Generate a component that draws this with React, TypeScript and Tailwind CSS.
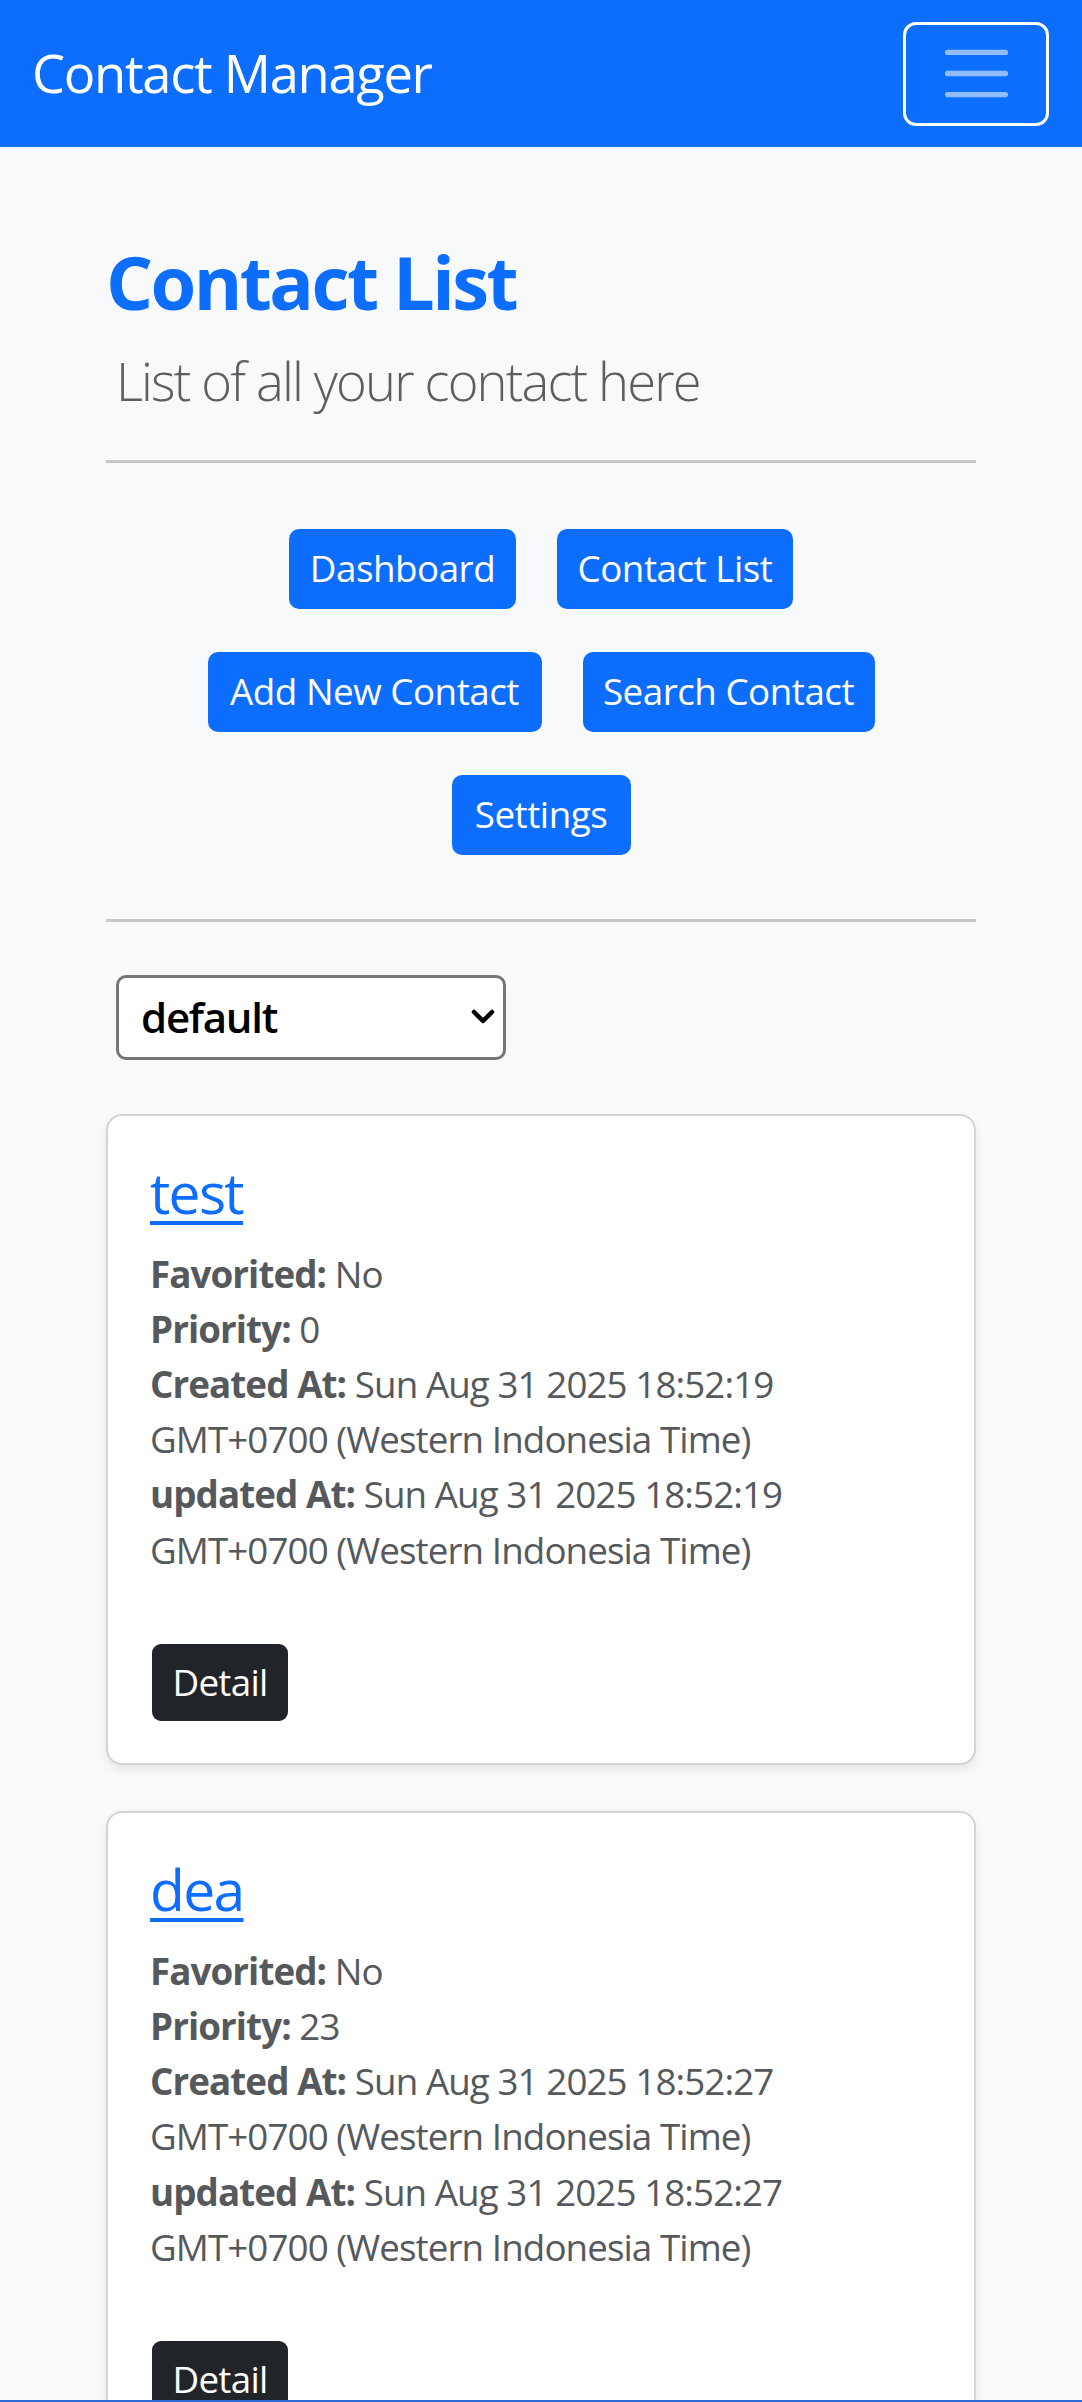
import React from "react";

type Contact = {
  name: string;
  favorited: string;
  priority: string;
  created: string;
  updated: string;
};

const contacts: Contact[] = [
  {
    name: "test",
    favorited: "No",
    priority: "0",
    created: "Sun Aug 31 2025 18:52:19",
    updated: "Sun Aug 31 2025 18:52:19",
  },
  {
    name: "dea",
    favorited: "No",
    priority: "23",
    created: "Sun Aug 31 2025 18:52:27",
    updated: "Sun Aug 31 2025 18:52:27",
  },
];

function NavButton({ label, w }: { label: string; w: string }) {
  return (
    <button
      className={`flex h-[80px] items-center justify-center rounded-[10px] bg-[#0d6efd] text-[36.75px] leading-none text-white ${w}`}
    >
      {label}
    </button>
  );
}

function ContactCard({ c }: { c: Contact }) {
  return (
    <div className="rounded-[16px] border-2 border-[#d3d3d3] bg-white p-[42px] shadow-[0_5px_10px_rgba(0,0,0,0.075)]">
      <a className="block text-[57px] leading-[1.2] tracking-[-0.03em] text-[#0d6efd] underline decoration-[4px] underline-offset-[7px]">
        {c.name}
      </a>
      <div className="mt-[21px] text-[36.75px] leading-[1.5] tracking-[-0.025em] text-[#56595c]">
        <div className="whitespace-nowrap">
          <span className="font-bold">Favorited:</span> {c.favorited}
        </div>
        <div className="whitespace-nowrap">
          <span className="font-bold">Priority:</span> {c.priority}
        </div>
        <div className="whitespace-nowrap">
          <span className="font-bold">Created At:</span> {c.created}
        </div>
        <div className="whitespace-nowrap">GMT+0700 (Western Indonesia Time)</div>
        <div className="whitespace-nowrap">
          <span className="font-bold">updated At:</span> {c.updated}
        </div>
        <div className="whitespace-nowrap">GMT+0700 (Western Indonesia Time)</div>
      </div>
      <button className="mt-[66px] ml-[2px] flex h-[77px] w-[136px] items-center justify-center rounded-[9px] bg-[#212529] text-[36.75px] leading-none tracking-[-0.02em] text-white">
        Detail
      </button>
    </div>
  );
}

export default function App() {
  return (
    <div className="relative h-[2402px] overflow-hidden bg-[#f8f9fa] font-['Open_Sans',sans-serif] text-[#212529]">
      <nav className="flex h-[147px] items-center justify-between bg-[#0d6efd] pl-[32px] pr-[33px]">
        <span className="text-[52.5px] leading-[1.5] tracking-[-0.025em] text-white">Contact Manager</span>
        <button className="flex h-[104px] w-[146px] items-center justify-center rounded-[13px] border-[3px] border-white">
          <svg width="79" height="79" viewBox="0 0 30 30" fill="none">
            <path
              d="M4 7h22M4 15h22M4 23h22"
              stroke="rgba(255,255,255,0.55)"
              strokeWidth="2"
              strokeLinecap="round"
            />
          </svg>
        </button>
      </nav>

      <main className="px-[106px] pt-[91px]">
        <h1 className="text-[74px] font-bold leading-[1.2] tracking-[-0.035em] text-[#0d6efd]">Contact List</h1>
        <p className="mt-[15px] pl-[10px] text-[52.5px] font-light leading-[1.5] tracking-[-0.035em] text-[#5c5f62]">
          List of all your contact here
        </p>
        <div className="mt-[39px] h-[3px] bg-[#c6c7c8]" />

        <div className="mt-[66px] flex flex-col items-center gap-[43px] tracking-[-0.03em]">
          <div className="flex gap-[41px]">
            <NavButton label="Dashboard" w="w-[227px]" />
            <NavButton label="Contact List" w="w-[236px]" />
          </div>
          <div className="flex gap-[41px]">
            <NavButton label="Add New Contact" w="w-[334px]" />
            <NavButton label="Search Contact" w="w-[292px]" />
          </div>
          <div className="flex gap-[41px]">
            <NavButton label="Settings" w="w-[179px]" />
          </div>
        </div>

        <div className="mt-[64px] h-[3px] bg-[#c6c7c8]" />

        <div className="ml-[10px] mt-[53px] flex h-[85px] w-[390px] items-center justify-between rounded-[10px] border-[3px] border-[#767676] bg-white pl-[22px] pr-[8px]">
          <span className="text-[42px] font-semibold leading-none tracking-[-0.03em] text-black">default</span>
          <svg width="24" height="16" viewBox="0 0 24 16" fill="none">
            <path d="M3 3l9 9 9-9" stroke="#000" strokeWidth="4.5" strokeLinecap="round" strokeLinejoin="round" />
          </svg>
        </div>

        <div className="mt-[54px] flex flex-col gap-[46px]">
          {contacts.map((c) => (
            <ContactCard key={c.name} c={c} />
          ))}
        </div>
      </main>

      <div className="absolute bottom-0 left-0 right-0 h-[2px] bg-[#2b6cd6]" />
    </div>
  );
}
